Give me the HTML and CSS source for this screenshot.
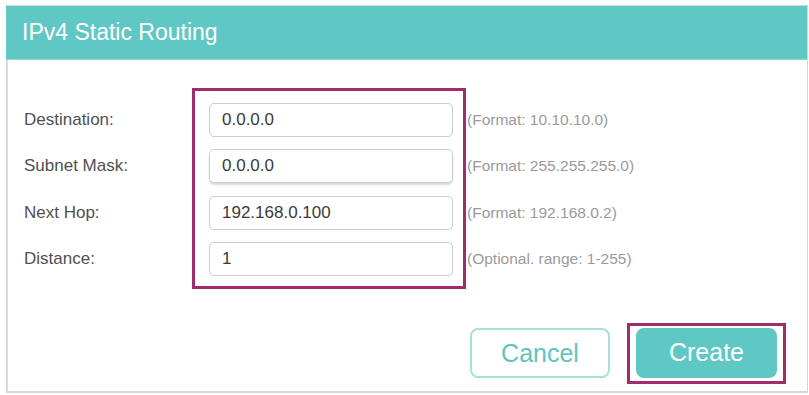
FILE: index.html
```html
<!DOCTYPE html>
<html>
<head>
<meta charset="utf-8">
<link rel="stylesheet" href="styles.css">
</head>
<body>
<div class="panel">
  <div class="panel-head">IPv4 Static Routing</div>
  <div class="panel-body">
    <div class="form">
      <div class="labels">
        <div class="row">Destination:</div>
        <div class="row">Subnet Mask:</div>
        <div class="row">Next Hop:</div>
        <div class="row">Distance:</div>
      </div>
      <div class="box">
        <div class="field">0.0.0.0</div>
        <div class="field field-shadow">0.0.0.0</div>
        <div class="field">192.168.0.100</div>
        <div class="field">1</div>
      </div>
      <div class="hints">
        <div class="row">(Format: 10.10.10.0)</div>
        <div class="row">(Format: 255.255.255.0)</div>
        <div class="row">(Format: 192.168.0.2)</div>
        <div class="row">(Optional. range: 1-255)</div>
      </div>
    </div>
    <div class="actions">
      <button class="btn btn-cancel">Cancel</button>
      <div class="highlight">
        <button class="btn btn-create">Create</button>
      </div>
    </div>
  </div>
</div>
</body>
</html>
```
FILE: styles.css
```css
html, body {
  margin: 0;
  padding: 0;
  background: #ffffff;
}
body {
  font-family: "Liberation Sans", Arial, sans-serif;
  width: 809px;
  height: 395px;
  overflow: hidden;
}
.panel {
  margin: 5px 1px 0 6px;
  border: 1px solid #d6d6d6;
  border-left: 2px solid #d9d9d9;
  border-bottom: 2px solid #d6d6d6;
  height: 388px;
  box-sizing: border-box;
  display: flex;
  flex-direction: column;
}
.panel-head {
  background: #5fc8c4;
  color: #ffffff;
  font-size: 23px;
  height: 53px;
  line-height: 53px;
  padding-left: 16px;
  border-bottom: 1px solid #8fdad6;
  margin-left: -2px;
}
.panel-body {
  flex: 1;
  padding: 28px 21px 5px 16px;
  display: flex;
  flex-direction: column;
}
.form {
  display: flex;
  align-items: flex-start;
}
.labels {
  width: 168px;
  padding-top: 15px;
  display: flex;
  flex-direction: column;
  gap: 12.3px;
  color: #505050;
  font-size: 17px;
}
.row {
  height: 34px;
  display: flex;
  align-items: center;
  white-space: nowrap;
}
.box {
  border: 3px solid #a02b6d;
  padding: 12px 10px 10px 14px;
  display: flex;
  flex-direction: column;
  gap: 12.3px;
}
.field {
  width: 244px;
  height: 34px;
  box-sizing: border-box;
  border: 1px solid #cdcdcd;
  border-radius: 5px;
  padding-left: 12px;
  display: flex;
  align-items: center;
  font-size: 17px;
  color: #3a3a3a;
}
.field-shadow {
  box-shadow: 0 2px 2px rgba(0, 0, 0, 0.15);
}
.hints {
  padding-top: 15px;
  margin-left: 1px;
  display: flex;
  flex-direction: column;
  gap: 12.3px;
  color: #9a9a9a;
  font-size: 15.5px;
}
.actions {
  margin-top: 34px;
  display: flex;
  justify-content: flex-end;
  align-items: center;
  gap: 17px;
}
.btn {
  font-family: "Liberation Sans", Arial, sans-serif;
  font-size: 25px;
  height: 50px;
  border-radius: 8px;
  padding: 0;
  cursor: pointer;
}
.btn-cancel {
  width: 140px;
  background: #ffffff;
  border: 2px solid #a9dedb;
  color: #5fc3be;
}
.highlight {
  border: 3px solid #a02b6d;
  padding: 2px 6px 3px 6px;
  display: flex;
}
.btn-create {
  width: 141px;
  height: 50px;
  background: #5fc8c4;
  border: none;
  color: #ffffff;
}
```
